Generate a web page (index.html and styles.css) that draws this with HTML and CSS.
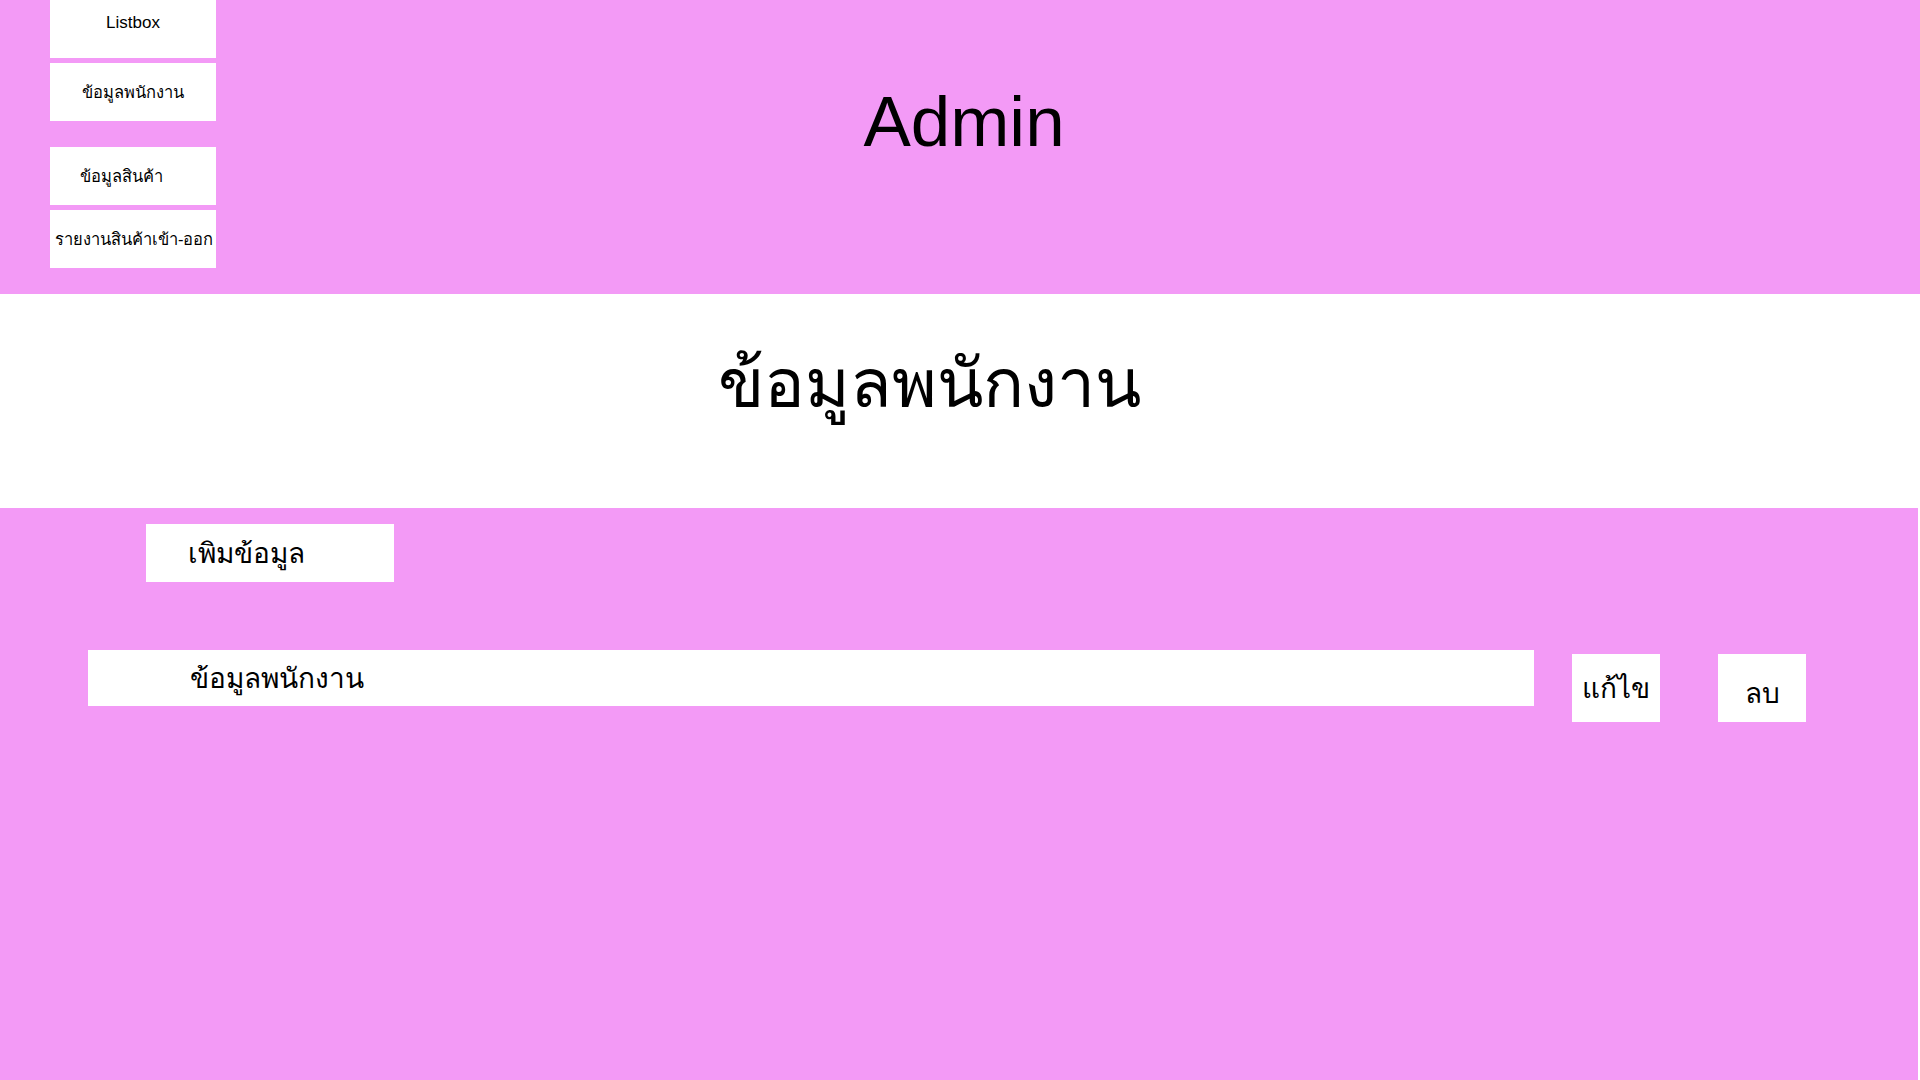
FILE: index.html
```html
<!DOCTYPE html>
<html lang="th">
<head>
<meta charset="utf-8">
<title>Admin</title>
<link rel="stylesheet" href="styles.css">
</head>
<body>
<header class="top">
  <nav class="side">
    <div class="side-btn side-listbox">Listbox</div>
    <div class="side-btn side-center">ข้อมูลพนักงาน</div>
    <div class="side-btn side-left gap-big">ข้อมูลสินค้า</div>
    <div class="side-btn side-tight">รายงานสินค้าเข้า-ออก</div>
  </nav>
  <h1 class="admin">Admin</h1>
  <div class="spacer"></div>
</header>
<section class="title-band">
  <h2 class="page-title">ข้อมูลพนักงาน</h2>
</section>
<main class="content">
  <div class="add-btn">เพิมข้อมูล</div>
  <div class="row">
    <div class="row-field">ข้อมูลพนักงาน</div>
    <div class="row-btn btn-edit">แก้ไข</div>
    <div class="row-btn btn-del">ลบ</div>
  </div>
</main>
</body>
</html>
```
FILE: styles.css
```css
html, body {
  margin: 0;
  padding: 0;
  background: #ffffff;
  font-family: Tahoma, "Liberation Sans", "DejaVu Sans", sans-serif;
  color: #000;
}
.top {
  height: 294px;
  background: #f39af6;
  display: grid;
  grid-template-columns: 216px 1fr 216px;
  box-sizing: border-box;
}
.side {
  padding-left: 50px;
  display: flex;
  flex-direction: column;
  gap: 5px;
}
.side-btn {
  width: 166px;
  height: 58px;
  background: #fff;
  font-size: 16.5px;
  display: flex;
  align-items: center;
  white-space: nowrap;
  overflow: hidden;
  box-sizing: border-box;
}
.side-listbox {
  justify-content: center;
  align-items: flex-start;
  padding-top: 13px;
  font-size: 17px;
}
.side-center { justify-content: center; }
.side-left { padding-left: 30px; }
.side-tight { padding-left: 5px; }
.gap-big { margin-top: 21px; }
.admin {
  margin: 0;
  padding-top: 82px;
  text-align: center;
  font-weight: normal;
  font-size: 71px;
  line-height: 80px;
  padding-left: 8px;
}
.title-band {
  height: 214px;
  background: #fff;
  box-sizing: border-box;
  padding-top: 44px;
}
.page-title {
  margin: 0;
  text-align: center;
  font-weight: normal;
  font-size: 68px;
  line-height: 90px;
  padding-right: 62px;
}
.content {
  width: 1918px;
  height: 572px;
  background: #f39af6;
  box-sizing: border-box;
  padding-top: 16px;
}
.add-btn {
  margin-left: 146px;
  width: 248px;
  height: 58px;
  background: #fff;
  box-sizing: border-box;
  padding-left: 42px;
  font-size: 28px;
  display: flex;
  align-items: center;
}
.row {
  margin-top: 68px;
  display: flex;
  align-items: flex-start;
}
.row-field {
  margin-left: 88px;
  width: 1446px;
  height: 56px;
  background: #fff;
  box-sizing: border-box;
  padding-left: 102px;
  font-size: 28px;
  display: flex;
  align-items: center;
}
.row-btn {
  margin-top: 4px;
  width: 88px;
  height: 68px;
  background: #fff;
  font-size: 28px;
  display: flex;
  align-items: center;
  justify-content: center;
}
.btn-edit { margin-left: 38px; }
.btn-del { margin-left: 58px; padding-top: 10px; box-sizing: border-box; }
```
